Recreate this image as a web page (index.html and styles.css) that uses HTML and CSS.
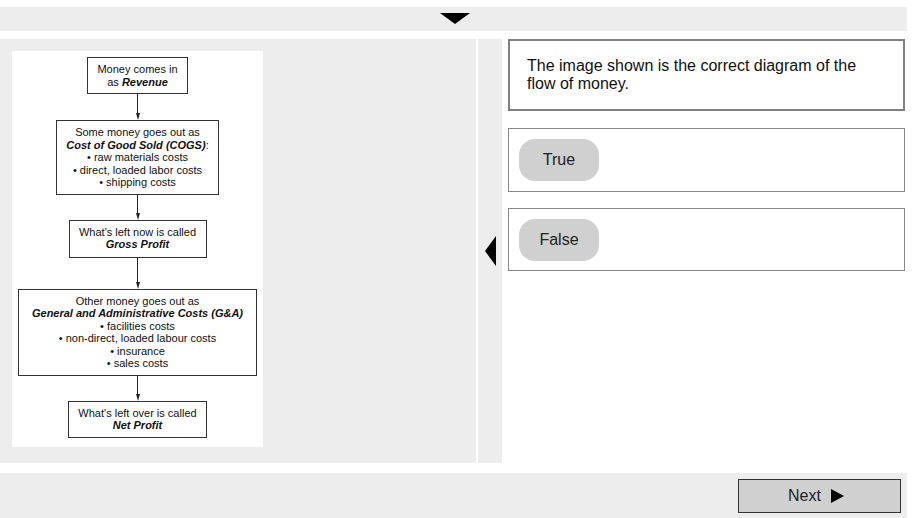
FILE: index.html
```html
<!DOCTYPE html>
<html lang="en">
<head>
    <meta charset="UTF-8">
    <meta name="viewport" content="width=device-width, initial-scale=1.0">
    <title>Flow of Money - True or False</title>
    <link rel="stylesheet" href="styles.css">
</head>
<body>
    <div class="top-bar">
        <span class="arrow-down"></span>
    </div>

    <div class="main">
        <div class="media-panel">
            <div class="diagram">
                <div class="step step-1">Money comes in<br>as <b><i>Revenue</i></b></div>
                <div class="arrow a-26"></div>
                <div class="step step-2">
                    Some money goes out as<br>
                    <b><i>Cost of Good Sold (COGS)</i></b>:<br>
                    • raw materials costs<br>
                    • direct, loaded labor costs<br>
                    • shipping costs
                </div>
                <div class="arrow a-25"></div>
                <div class="step step-3">What's left now is called<br><b><i>Gross Profit</i></b></div>
                <div class="arrow a-31"></div>
                <div class="step step-4">
                    Other money goes out as<br>
                    <b><i>General and Administrative Costs (G&amp;A)</i></b><br>
                    • facilities costs<br>
                    • non-direct, loaded labour costs<br>
                    • insurance<br>
                    • sales costs
                </div>
                <div class="arrow a-25"></div>
                <div class="step step-5">What's left over is called<br><b><i>Net Profit</i></b></div>
            </div>
        </div>

        <div class="collapse-bar">
            <span class="arrow-left"></span>
        </div>

        <div class="question-panel">
            <div class="question">The image shown is the correct diagram of the flow of money.</div>
            <div class="option"><button class="choice">True</button></div>
            <div class="option"><button class="choice">False</button></div>
        </div>
    </div>

    <div class="footer">
        <button class="next-btn">Next <span class="play"></span></button>
    </div>
</body>
</html>
```

FILE: styles.css
```css
* {
    margin: 0;
    padding: 0;
    box-sizing: border-box;
}

body {
    font-family: 'Liberation Sans', Arial, sans-serif;
    background: #fff;
    color: #000;
    width: 921px;
    height: 518px;
    overflow: hidden;
}

.top-bar {
    margin-top: 7px;
    width: 907px;
    height: 24px;
    background: #ededed;
    display: flex;
    justify-content: center;
    padding-top: 6px;
    padding-left: 3px;
}

.arrow-down {
    width: 0;
    height: 0;
    border-left: 15.5px solid transparent;
    border-right: 15.5px solid transparent;
    border-top: 11px solid #000;
}

.main {
    display: flex;
    margin-top: 8px;
    height: 424px;
}

.media-panel {
    width: 476px;
    background: #ededed;
    padding: 12px;
}

.diagram {
    width: 251px;
    height: 396px;
    background: #fff;
    padding-top: 6px;
    display: flex;
    flex-direction: column;
    align-items: center;
}

.step {
    border: 1px solid #333;
    font-size: 11px;
    line-height: 12.5px;
    text-align: center;
    padding: 5px 2px;
    color: #111;
}

.step-1 { width: 101px; }
.step-2 { width: 163px; }
.step-3 { width: 138px; padding-bottom: 6px; }
.step-4 { width: 239px; }
.step-5 { width: 139px; }

.arrow {
    display: flex;
    flex-direction: column;
    align-items: center;
}

.arrow::before {
    content: "";
    flex: 1;
    width: 1px;
    background: #222;
}

.arrow::after {
    content: "";
    width: 0;
    height: 0;
    border-left: 2.5px solid transparent;
    border-right: 2.5px solid transparent;
    border-top: 7px solid #222;
}

.a-25 { height: 25px; }
.a-26 { height: 26px; }
.a-31 { height: 31px; }

.collapse-bar {
    width: 24px;
    margin-left: 2px;
    background: #ededed;
    display: flex;
    align-items: center;
    justify-content: center;
    padding-left: 1px;
}

.arrow-left {
    width: 0;
    height: 0;
    border-top: 15.5px solid transparent;
    border-bottom: 15.5px solid transparent;
    border-right: 11px solid #000;
}

.question-panel {
    width: 397px;
    margin-left: 6px;
}

.question {
    border: 2px solid #808080;
    font-size: 16px;
    line-height: 18px;
    padding: 16px 40px 16px 17px;
    height: 72px;
    color: #111;
}

.option {
    border: 1px solid #888;
    height: 64px;
    margin-top: 17px;
    padding: 10px;
}

.option + .option {
    margin-top: 16px;
    height: 63px;
}

.choice {
    width: 80px;
    height: 42px;
    border: none;
    border-radius: 16px;
    background: #d0d0d0;
    font-family: inherit;
    font-size: 16px;
    color: #222;
    cursor: pointer;
}

.footer {
    margin-top: 10px;
    width: 907px;
    height: 45px;
    background: #ededed;
    display: flex;
    justify-content: flex-end;
    padding: 6px 6px 0 0;
}

.next-btn {
    width: 163px;
    height: 34px;
    border: 1px solid #333;
    background: #d0d0d0;
    font-family: inherit;
    font-size: 16px;
    color: #222;
    display: flex;
    align-items: center;
    justify-content: center;
    gap: 10px;
    padding-right: 7px;
    cursor: pointer;
}

.play {
    width: 0;
    height: 0;
    border-top: 7px solid transparent;
    border-bottom: 7px solid transparent;
    border-left: 13px solid #000;
}
```
